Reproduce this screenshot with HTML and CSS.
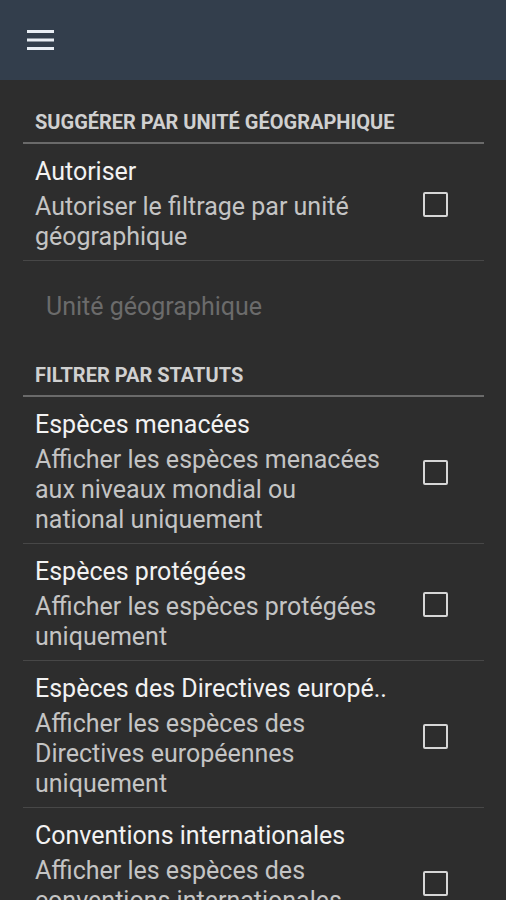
FILE: index.html
```html
<!DOCTYPE html>
<html lang="fr">
<head>
  <meta charset="UTF-8">
  <title>Filtres</title>
  <meta name="viewport" content="width=device-width, initial-scale=1.0">
  <link rel="stylesheet" href="styles.css">
</head>
<body>
  <header class="toolbar">
    <svg class="menu-icon" width="27" height="20" viewBox="0 0 27 20">
      <rect x="0" y="0" width="27" height="3" fill="#e9eef4"/>
      <rect x="0" y="8.5" width="27" height="3" fill="#e9eef4"/>
      <rect x="0" y="17" width="27" height="3" fill="#e9eef4"/>
    </svg>
  </header>

  <div class="prefs">
    <div class="category">SUGGÉRER PAR UNITÉ GÉOGRAPHIQUE</div>
    <div class="pref">
      <div class="pref-text">
        <div class="pref-title">Autoriser</div>
        <div class="pref-summary">Autoriser le filtrage par unité géographique</div>
      </div>
      <div class="checkbox"></div>
    </div>
    <div class="pref-disabled">Unité géographique</div>

    <div class="category">FILTRER PAR STATUTS</div>
    <div class="pref">
      <div class="pref-text">
        <div class="pref-title">Espèces menacées</div>
        <div class="pref-summary">Afficher les espèces menacées aux niveaux mondial ou national uniquement</div>
      </div>
      <div class="checkbox"></div>
    </div>
    <div class="pref">
      <div class="pref-text">
        <div class="pref-title">Espèces protégées</div>
        <div class="pref-summary">Afficher les espèces protégées uniquement</div>
      </div>
      <div class="checkbox"></div>
    </div>
    <div class="pref">
      <div class="pref-text">
        <div class="pref-title">Espèces des Directives europé..</div>
        <div class="pref-summary">Afficher les espèces des Directives européennes uniquement</div>
      </div>
      <div class="checkbox"></div>
    </div>
    <div class="pref">
      <div class="pref-text">
        <div class="pref-title">Conventions internationales</div>
        <div class="pref-summary">Afficher les espèces des conventions internationales uniquement</div>
      </div>
      <div class="checkbox"></div>
    </div>
  </div>
</body>
</html>
```

FILE: styles.css
```css
html, body {
  height: 100%;
}
body {
  margin: 0;
  font-family: Roboto, 'Noto Sans', sans-serif;
  background-color: #2d2d2d;
  overflow: hidden;
}
.toolbar {
  height: 80px;
  background-color: #333e4c;
  display: flex;
  align-items: center;
  padding-left: 27px;
}
.prefs {
  margin: 0 22px 0 23px;
}
.category {
  padding: 30px 12px 8px;
  font-size: 20px;
  line-height: 24px;
  font-weight: bold;
  color: #d0d0d0;
  border-bottom: 2px solid #6a6a6a;
}
.pref {
  display: flex;
  align-items: center;
  gap: 34px;
  padding: 13px 36px 8px 12px;
  border-bottom: 1px solid #474747;
}
.pref-text {
  flex: 1;
  min-width: 0;
}
.pref-title {
  font-size: 25px;
  line-height: 30px;
  color: #f2f2f2;
  white-space: nowrap;
  overflow: hidden;
}
.pref-summary {
  margin-top: 5px;
  font-size: 25px;
  line-height: 30px;
  color: #c4c4c4;
}
.checkbox {
  width: 21px;
  height: 21px;
  border: 2px solid #d6d6d6;
  border-radius: 2px;
  flex-shrink: 0;
}
.pref-disabled {
  padding: 31px 12px 11px 23px;
  font-size: 25px;
  line-height: 30px;
  color: #6b6b6b;
}
```
